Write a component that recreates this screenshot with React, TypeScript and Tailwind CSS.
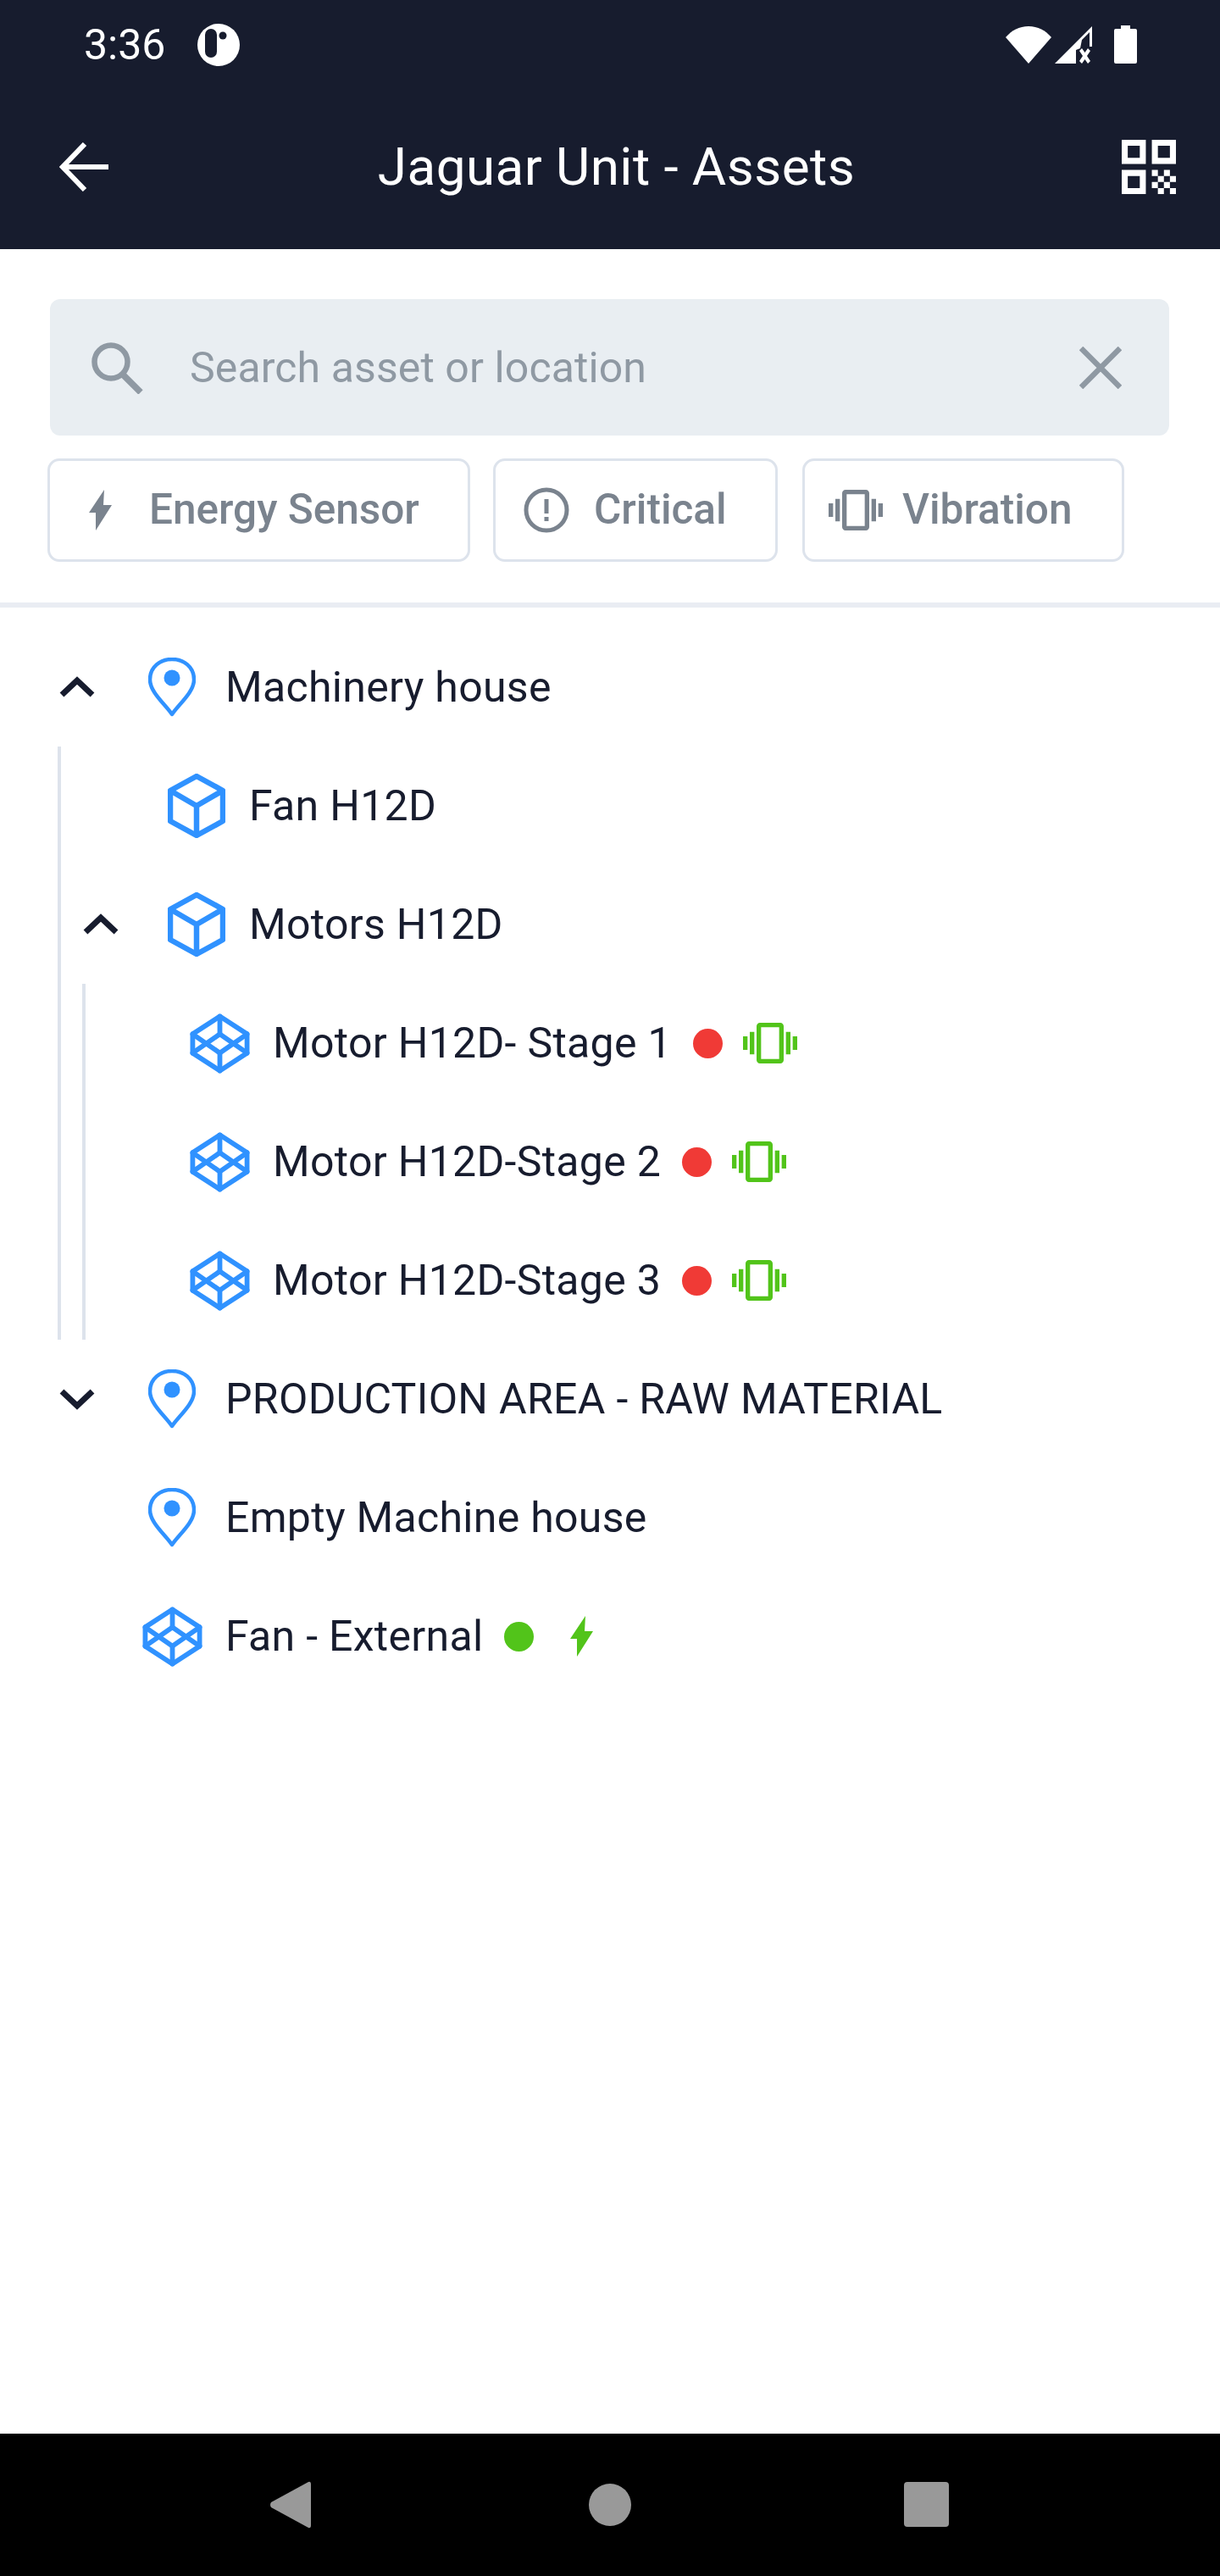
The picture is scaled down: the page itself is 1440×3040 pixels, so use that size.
import type { ReactNode } from "react";
import { Codepen } from "lucide-react";

const BLUE = "#3092ff";
const GREEN = "#52c41a";

function Pin() {
  return (
    <svg width="56" height="70" viewBox="0 0 56 70" fill="none">
      <path d="M28 67 C20 55 2 41 2 26 C2 11 14 2 28 2 C42 2 54 11 54 26 C54 41 36 55 28 67 Z" stroke={BLUE} strokeWidth="4.5" strokeLinejoin="round" />
      <circle cx="28" cy="24" r="9.5" fill={BLUE} />
    </svg>
  );
}

function Cube() {
  return (
    <svg width="68" height="76" viewBox="0 0 68 76" fill="none" stroke={BLUE} strokeWidth="6.5" strokeLinejoin="round" className="ml-[2px]">
      <path d="M34 3 L65 20 V56 L34 73 L3 56 V20 Z" />
      <path d="M3 20 L34 38 L65 20 M34 38 V73" />
    </svg>
  );
}

function CodepenIcon() {
  return <Codepen size={77} color={BLUE} strokeWidth={1.8} className="shrink-0" />;
}

function Chevron({ down }: { down?: boolean }) {
  return (
    <svg width="42" height="26" viewBox="0 0 42 26" fill="none" className={down ? "rotate-180" : ""}>
      <path d="M3 22 L21 5 L39 22" stroke="#171c2e" strokeWidth="7" />
    </svg>
  );
}

function Vibration({ color }: { color: string }) {
  return (
    <svg width="64" height="48" viewBox="0 3 24 18" fill={color}>
      <path d="M0 15h2V9H0v6zm3 2h2V7H3v10zm19-8v6h2V9h-2zm-3 8h2V7h-2v10zM16.5 3h-9C6.67 3 6 3.67 6 4.5v15c0 .83.67 1.5 1.5 1.5h9c.83 0 1.5-.67 1.5-1.5v-15c0-.83-.67-1.5-1.5-1.5zM16 19H8V5h8v14z" />
    </svg>
  );
}

function Bolt({ color }: { color: string }) {
  return (
    <svg width="27" height="48" viewBox="0 0 27 48" fill={color}>
      <polygon points="18,0 0,27 8,27 8,48 27,18 17,18" />
    </svg>
  );
}

function Row({ pl, chevron, icon, label, children }: { pl: string; chevron?: "up" | "down"; icon: ReactNode; label: string; children?: ReactNode }) {
  return (
    <div className={`flex h-[140px] items-center ${pl}`}>
      <div className="flex w-[70px] shrink-0 items-center justify-center">
        {chevron && <Chevron down={chevron === "down"} />}
      </div>
      <div className="ml-[42px] flex w-[70px] shrink-0 items-center justify-center">{icon}</div>
      <span className="ml-[28px] text-[50px] leading-none tracking-[0.3px] text-[#171c2e]">{label}</span>
      {children}
    </div>
  );
}

function Status({ color }: { color: string }) {
  return <span className="ml-[25px] h-[35px] w-[35px] rounded-full" style={{ backgroundColor: color }} />;
}

function Chip({ icon, label, className }: { icon: ReactNode; label: string; className: string }) {
  return (
    <div className={`flex h-[122px] items-center rounded-[14px] border-[3.5px] border-[#dde3ec] ${className}`}>
      {icon}
      <span className="text-[49.5px] font-medium leading-none text-[#7a838e]">{label}</span>
    </div>
  );
}

export default function App() {
  return (
    <div className="flex h-[3040px] w-[1440px] flex-col overflow-hidden bg-white font-['Roboto',sans-serif]">
      {/* Status bar + app bar */}
      <div className="h-[294px] shrink-0 bg-[#171c2e] text-white">
        <div className="flex h-[105px] items-center pl-[99px] pr-[98px]">
          <span className="text-[50px] leading-none">3:36</span>
          <svg width="50" height="50" viewBox="0 0 50 50" className="ml-[38px]">
            <circle cx="25" cy="25" r="25" fill="#fff" />
            <rect x="9" y="6" width="14" height="34" rx="7" fill="#171c2e" />
            <circle cx="30" cy="14" r="4.500" fill="#171c2e" />
          </svg>
          <div className="ml-auto flex items-center">
            <svg width="54" height="44" viewBox="0 0 54 44" fill="#fff">
              <path d="M27 44 L0 13 C7 5 16 0 27 0 C38 0 47 5 54 13 Z" />
            </svg>
            <svg width="44" height="44" viewBox="0 0 44 44" fill="#fff" className="ml-[4px]">
              <path d="M0 44 L44 0 V24 H41 V7 L32 16 L30 26 L25 28 V44 Z" />
              <path d="M29 29 L32 26 L35.500 31 L39 26 L42 29 L38 35 L42 41 L39 44 L35.500 39 L32 44 L29 41 L33 35 Z" />
            </svg>
            <svg width="27" height="45" viewBox="0 0 27 45" fill="#fff" className="ml-[26px]">
              <path d="M8 0 H19 V4 H25 Q27 4 27 6 V43 Q27 45 25 45 H2 Q0 45 0 43 V6 Q0 4 2 4 H8 Z" />
            </svg>
          </div>
        </div>
        <div className="flex h-[189px] items-center justify-between pb-[5px] pl-[70px] pr-[52px]">
          <svg width="58" height="58" viewBox="0 0 58 58" fill="none" stroke="#fff" strokeWidth="6">
            <path d="M58 29 H5 M30 2 L4 29 L30 56" />
          </svg>
          <span className="ml-[3px] text-[62px] leading-none tracking-[0.45px]">Jaguar Unit - Assets</span>
          <svg width="64" height="64" viewBox="3 3 18 18" fill="#fff">
            <path d="M3 11h8V3H3v8zm2-6h4v4H5V5zM3 21h8v-8H3v8zm2-6h4v4H5v-4zM13 3v8h8V3h-8zm6 6h-4V5h4v4zM19 19h2v2h-2zM13 13h2v2h-2zM15 15h2v2h-2zM13 17h2v2h-2zM15 19h2v2h-2zM17 17h2v2h-2zM17 13h2v2h-2zM19 15h2v2h-2z" />
          </svg>
        </div>
      </div>

      {/* Search + filters */}
      <div className="shrink-0 border-b-[6px] border-[#e9edf3] pb-[48px] pt-[59px]">
        <div className="ml-[59px] flex h-[161px] w-[1321px] items-center rounded-[12px] bg-[#e9eef2] pl-[49px] pr-[56px]">
          <svg width="62" height="62" viewBox="0 0 62 62" fill="none" stroke="#8f99a3">
            <circle cx="23" cy="24" r="19.500" strokeWidth="6.5" />
            <path d="M37 39 L58 60" strokeWidth="7.5" />
          </svg>
          <span className="ml-[54px] text-[50px] leading-none tracking-[0.1px] text-[#8f99a3]">Search asset or location</span>
          <svg width="50" height="50" viewBox="0 0 50 50" fill="none" stroke="#8f99a3" strokeWidth="6.5" className="ml-auto">
            <path d="M2 2 L48 48 M48 2 L2 48" />
          </svg>
        </div>
        <div className="mt-[27px] flex pl-[56px]">
          <Chip
            className="w-[499px] pl-[46px]"
            label="Energy Sensor"
            icon={<span className="mr-[44px] flex"><Bolt color="#7a838e" /></span>}
          />
          <Chip
            className="ml-[27px] w-[336px] pl-[33px]"
            label="Critical"
            icon={
              <svg width="54" height="54" viewBox="0 0 54 54" className="mr-[29px]">
                <circle cx="27" cy="27" r="24" fill="none" stroke="#7a838e" strokeWidth="5" />
                <rect x="24.500" y="14" width="5" height="17" fill="#7a838e" />
                <rect x="24.500" y="35" width="5" height="5" fill="#7a838e" />
              </svg>
            }
          />
          <Chip
            className="ml-[29px] w-[380px] pl-[28px]"
            label="Vibration"
            icon={<span className="mr-[23px] flex"><Vibration color="#7a838e" /></span>}
          />
        </div>
      </div>

      {/* Tree */}
      <div className="flex-1 pt-[24px]">
        <Row pl="pl-[56px]" chevron="up" icon={<Pin />} label="Machinery house" />
        <div className="ml-[68px] border-l-[4px] border-[#dde3ec]">
          <Row pl="pl-[12px]" icon={<Cube />} label="Fan H12D" />
          <Row pl="pl-[12px]" chevron="up" icon={<Cube />} label="Motors H12D" />
          <div className="ml-[25px] border-l-[4px] border-[#dde3ec]">
            <Row pl="pl-[11px]" icon={<CodepenIcon />} label="Motor H12D- Stage 1">
              <Status color="#f03a36" />
              <span className="ml-[24px] flex"><Vibration color={GREEN} /></span>
            </Row>
            <Row pl="pl-[11px]" icon={<CodepenIcon />} label="Motor H12D-Stage 2">
              <Status color="#f03a36" />
              <span className="ml-[24px] flex"><Vibration color={GREEN} /></span>
            </Row>
            <Row pl="pl-[11px]" icon={<CodepenIcon />} label="Motor H12D-Stage 3">
              <Status color="#f03a36" />
              <span className="ml-[24px] flex"><Vibration color={GREEN} /></span>
            </Row>
          </div>
        </div>
        <Row pl="pl-[56px]" chevron="down" icon={<Pin />} label="PRODUCTION AREA - RAW MATERIAL" />
        <Row pl="pl-[56px]" icon={<Pin />} label="Empty Machine house" />
        <Row pl="pl-[56px]" icon={<CodepenIcon />} label="Fan - External">
          <Status color={GREEN} />
          <span className="ml-[43px] flex"><Bolt color={GREEN} /></span>
        </Row>
      </div>

      {/* Android nav bar */}
      <div className="flex h-[168px] shrink-0 items-start bg-black pt-[56px]">
        <svg width="50" height="56" viewBox="0 0 50 56" fill="#999" className="ml-[318px]">
          <path d="M46 1 Q49 0 49 4 V52 Q49 56 46 55 L2 31 Q0 28 2 25 Z" />
        </svg>
        <div className="ml-[327px] mt-[3px] h-[50px] w-[50px] rounded-full bg-[#999]" />
        <div className="ml-[322px] mt-[1px] h-[53px] w-[53px] rounded-[4px] bg-[#999]" />
      </div>
    </div>
  );
}
